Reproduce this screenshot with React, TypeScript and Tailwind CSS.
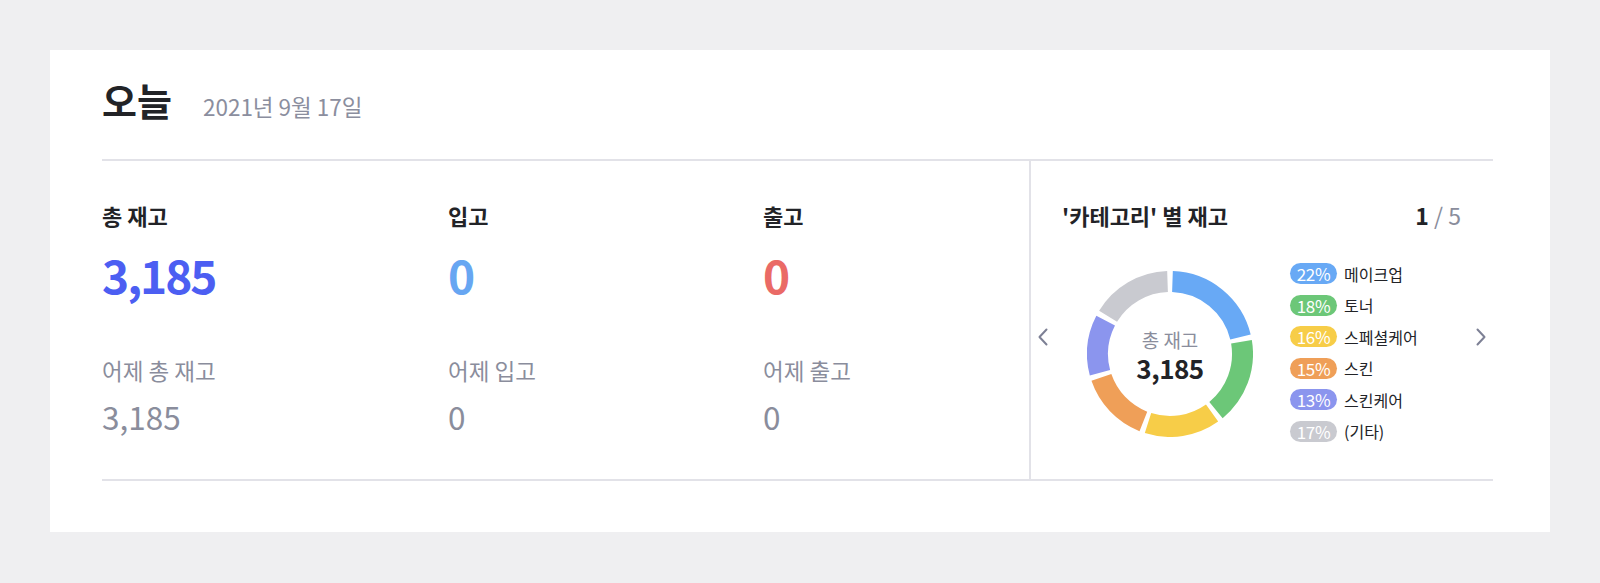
import React from "react";

const font = { fontFamily: '"Noto Sans CJK KR", "Noto Sans", sans-serif' };

const segments = [
  { pct: 22, label: "메이크업", stroke: "#68a9f5", pill: "bg-[#68a9f5]" },
  { pct: 18, label: "토너", stroke: "#6cc778", pill: "bg-[#6cc778]" },
  { pct: 16, label: "스페셜케어", stroke: "#f7cd48", pill: "bg-[#f7cd48]" },
  { pct: 15, label: "스킨", stroke: "#ef9f58", pill: "bg-[#ef9f58]" },
  { pct: 13, label: "스킨케어", stroke: "#8b95ee", pill: "bg-[#8b95ee]" },
  { pct: 17, label: "(기타)", stroke: "#c9cad0", pill: "bg-[#c9cad0]" },
];

const stats = [
  { label: "총 재고", value: "3,185", color: "text-[#4c5ef2]", prevLabel: "어제 총 재고", prev: "3,185", width: "w-[346px]" },
  { label: "입고", value: "0", color: "text-[#67a6f2]", prevLabel: "어제 입고", prev: "0", width: "w-[315px]" },
  { label: "출고", value: "0", color: "text-[#ea6a66]", prevLabel: "어제 출고", prev: "0", width: "flex-1" },
];

// point on circle, angle in degrees clockwise from 12 o'clock
const pt = (cx: number, cy: number, r: number, deg: number) => {
  const a = (deg * Math.PI) / 180;
  return [cx + r * Math.sin(a), cy - r * Math.cos(a)];
};

const Donut = () => {
  const total = segments.reduce((s, x) => s + x.pct, 0);
  const cx = 83;
  const cy = 83;
  const r = 72.5;
  const gap = 3.9;
  let acc = 0;
  return (
    <div className="relative w-[166px] h-[166px]">
      <svg width="166" height="166" viewBox="0 0 166 166">
        {segments.map((s) => {
          const start = (acc / total) * 360 + gap / 2;
          acc += s.pct;
          const end = (acc / total) * 360 - gap / 2;
          const [x1, y1] = pt(cx, cy, r, start);
          const [x2, y2] = pt(cx, cy, r, end);
          const large = end - start > 180 ? 1 : 0;
          return (
            <path
              key={s.label}
              d={`M ${x1} ${y1} A ${r} ${r} 0 ${large} 1 ${x2} ${y2}`}
              fill="none"
              stroke={s.stroke}
              strokeWidth={21}
            />
          );
        })}
      </svg>
      <div className="absolute inset-0 flex flex-col items-center justify-center gap-[3px] pt-[3px]">
        <span className="text-[19px] leading-[22px] text-[#8a8d9c]">총 재고</span>
        <span className="text-[26px] leading-[28px] font-bold tracking-[-0.5px] text-[#222327]">3,185</span>
      </div>
    </div>
  );
};

const Chevron = ({ dir }: { dir: "left" | "right" }) => (
  <svg width="10" height="18" viewBox="0 0 10 18" className="mt-[72px] shrink-0">
    <polyline
      points={dir === "left" ? "8.5,1.5 1.5,9 8.5,16.5" : "1.5,1.5 8.5,9 1.5,16.5"}
      fill="none"
      stroke="#7d8095"
      strokeWidth={2}
      strokeLinecap="round"
      strokeLinejoin="round"
    />
  </svg>
);

export default function App() {
  return (
    <div className="min-h-[583px] bg-[#efeff1] pt-[50px] pl-[50px]" style={font}>
      <div className="w-[1500px] h-[482px] bg-white pl-[52px] pr-[57px]">
        {/* header */}
        <div className="h-[109px] flex items-baseline gap-[31px] pt-[28px]">
          <h1 className="text-[38px] leading-[44px] font-bold text-[#222327]">오늘</h1>
          <span className="text-[22.5px] leading-[30px] text-[#8b8e9e]">2021년 9월 17일</span>
        </div>

        <div className="flex h-[322px] border-t-2 border-b-2 border-[#e2e2e8]">
          {/* today stats */}
          <div className="w-[927px] flex pt-[39px]">
            {stats.map((s) => (
              <div key={s.label} className={`${s.width} flex flex-col`}>
                <span className="text-[22px] leading-[30px] font-bold text-[#222327]">{s.label}</span>
                <span className={`mt-[16px] text-[46px] leading-[56px] font-bold tracking-[-2px] ${s.color}`}>
                  {s.value}
                </span>
                <span className="mt-[53px] text-[22.5px] leading-[30px] text-[#8a8d9c]">{s.prevLabel}</span>
                <span className="mt-[11px] text-[31.5px] leading-[40px] text-[#8a8d9c]">{s.prev}</span>
              </div>
            ))}
          </div>

          {/* category stock */}
          <div className="flex-1 border-l-2 border-[#e2e2e8] pt-[39px]">
            <div className="flex items-baseline justify-between pl-[31px] pr-[32px]">
              <span className="text-[22px] leading-[30px] font-bold text-[#222327]">'카테고리' 별 재고</span>
              <span className="text-[23px] leading-[30px]">
                <span className="font-bold text-[#222327]">1</span>
                <span className="text-[#8a8d9c]"> / 5</span>
              </span>
            </div>
            <div className="flex items-start mt-[26px] pl-[7px] pr-[7px]">
              <Chevron dir="left" />
              <div className="ml-[39px] mt-[15px]">
                <Donut />
              </div>
              <div className="ml-[37px] mt-[2px] flex flex-col">
                {segments.map((s) => (
                  <div key={s.label} className="h-[31.5px] flex items-center gap-[7px]">
                    <span
                      className={`${s.pill} w-[47px] h-[21px] rounded-full flex items-center justify-center text-[17px] leading-none tracking-[-0.4px] text-white`}
                    >
                      {s.pct}%
                    </span>
                    <span className="text-[16px] leading-none text-[#222327]">{s.label}</span>
                  </div>
                ))}
              </div>
              <div className="ml-auto">
                <Chevron dir="right" />
              </div>
            </div>
          </div>
        </div>
      </div>
    </div>
  );
}
